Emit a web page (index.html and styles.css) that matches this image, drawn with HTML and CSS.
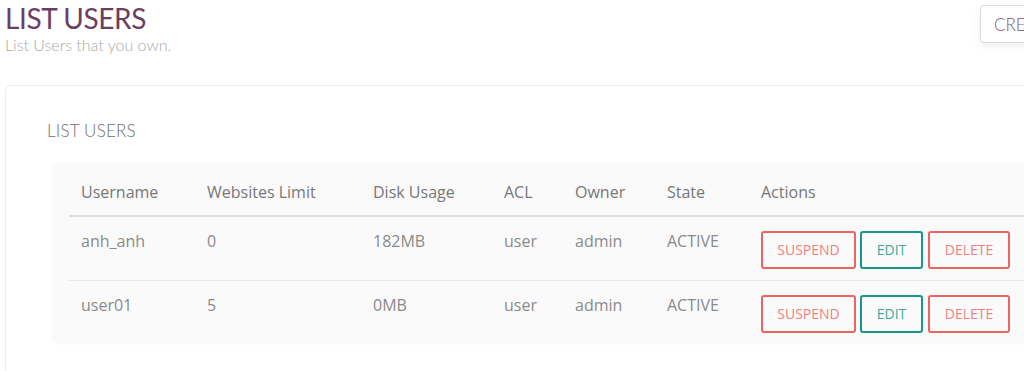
FILE: index.html
```html
<!DOCTYPE html>
<html>
<head>
<meta charset="utf-8">
<link rel="stylesheet" href="styles.css">
</head>
<body>
<div class="page">
  <div class="page-head">
    <div class="titles">
      <h1 class="title">LIST USERS</h1>
      <p class="subtitle">List Users that you own.</p>
    </div>
    <button class="create-btn">CREATE USER</button>
  </div>
  <div class="card">
    <h2 class="card-title">LIST USERS</h2>
    <div class="table-box">
      <table class="users">
        <colgroup>
          <col class="c1"><col class="c2"><col class="c3"><col class="c4"><col class="c5"><col class="c6"><col class="c7">
        </colgroup>
        <thead>
          <tr><th>Username</th><th>Websites Limit</th><th>Disk Usage</th><th>ACL</th><th>Owner</th><th>State</th><th>Actions</th></tr>
        </thead>
        <tbody>
          <tr>
            <td>anh_anh</td><td>0</td><td>182MB</td><td>user</td><td>admin</td><td>ACTIVE</td>
            <td class="actions"><div class="btns"><button class="btn red w-susp">SUSPEND</button><button class="btn teal w-edit">EDIT</button><button class="btn red w-del">DELETE</button></div></td>
          </tr>
          <tr>
            <td>user01</td><td>5</td><td>0MB</td><td>user</td><td>admin</td><td>ACTIVE</td>
            <td class="actions"><div class="btns"><button class="btn red w-susp">SUSPEND</button><button class="btn teal w-edit">EDIT</button><button class="btn red w-del">DELETE</button></div></td>
          </tr>
        </tbody>
      </table>
    </div>
  </div>
</div>
</body>
</html>
```
FILE: styles.css
```css
html, body {
  margin: 0;
  padding: 0;
  overflow: hidden;
  background: #fff;
}
.page {
  width: 1120px;
  padding: 0 0 0 5px;
  box-sizing: border-box;
}
.page-head {
  display: flex;
  justify-content: space-between;
  align-items: flex-start;
  height: 85px;
}
.titles {
  padding-top: 2px;
}
.title {
  margin: 0;
  font-family: "Lato", sans-serif;
  font-weight: 400;
  font-size: 28px;
  line-height: 32px;
  color: #6d3e63;
  letter-spacing: -0.4px;
}
.subtitle {
  margin: 2px 0 0;
  font-family: "Lato", sans-serif;
  font-weight: 300;
  font-size: 16px;
  line-height: 18px;
  color: #a9a9a9;
}
.create-btn {
  margin-top: 5px;
  height: 38px;
  width: 140px;
  padding: 0 0 0 13px;
  text-align: left;
  background: #fff;
  border: 1px solid #dcdcdc;
  border-radius: 4px;
  box-shadow: 0 3px 8px rgba(0,0,0,0.07);
  font-family: "Lato", sans-serif;
  font-weight: 300;
  font-size: 17px;
  color: #7a5a76;
}
.card {
  border: 1px solid #eeeeee;
  border-radius: 5px;
  background: #fff;
  padding: 35px 0 30px 41px;
  box-shadow: 0 1px 3px rgba(0,0,0,0.03);
}
.card-title {
  margin: 0 0 22px;
  font-family: "Lato", sans-serif;
  font-weight: 300;
  font-size: 17px;
  line-height: 20px;
  color: #6f6f6f;
  letter-spacing: 0.2px;
}
.table-box {
  margin-left: 5px;
  background: #fafafa;
  border-radius: 8px;
  padding: 0 0 0 17px;
  box-shadow: 0 0 4px rgba(0,0,0,0.02);
}
.users {
  border-collapse: collapse;
  table-layout: fixed;
  width: 1010px;
  font-family: "Open Sans", sans-serif;
  font-size: 16px;
}
.c1 { width: 126px; }
.c2 { width: 166px; }
.c3 { width: 131px; }
.c4 { width: 71px; }
.c5 { width: 92px; }
.c6 { width: 94px; }
.c7 { width: 330px; }
.users th {
  text-align: left;
  font-weight: 400;
  color: #777;
  padding: 18px 12px 12px;
  line-height: 22px;
  border-bottom: 2px solid #dedede;
}
.users tbody tr {
  height: 64px;
}
.users td {
  vertical-align: top;
  color: #8a8a8a;
  padding: 13px 12px 0;
  line-height: 22px;
}
.users tbody tr:first-child td {
  border-bottom: 1px solid #e6e6e6;
}
.users td.actions {
  padding-top: 14px;
}
.btns {
  display: flex;
  gap: 4px;
}
.btn {
  height: 38px;
  box-sizing: border-box;
  background: transparent;
  border: 2px solid;
  border-radius: 3px;
  font-family: "Open Sans", sans-serif;
  font-weight: 500;
  font-size: 14px;
  padding: 0;
  line-height: 34px;
}
.red {
  border-color: #ec6464;
  color: #f27f7f;
}
.teal {
  border-color: #17998a;
  color: #3aaa9b;
}
.w-susp { width: 95px; }
.w-edit { width: 63px; }
.w-del { width: 82px; margin-left: 1px; }
```
